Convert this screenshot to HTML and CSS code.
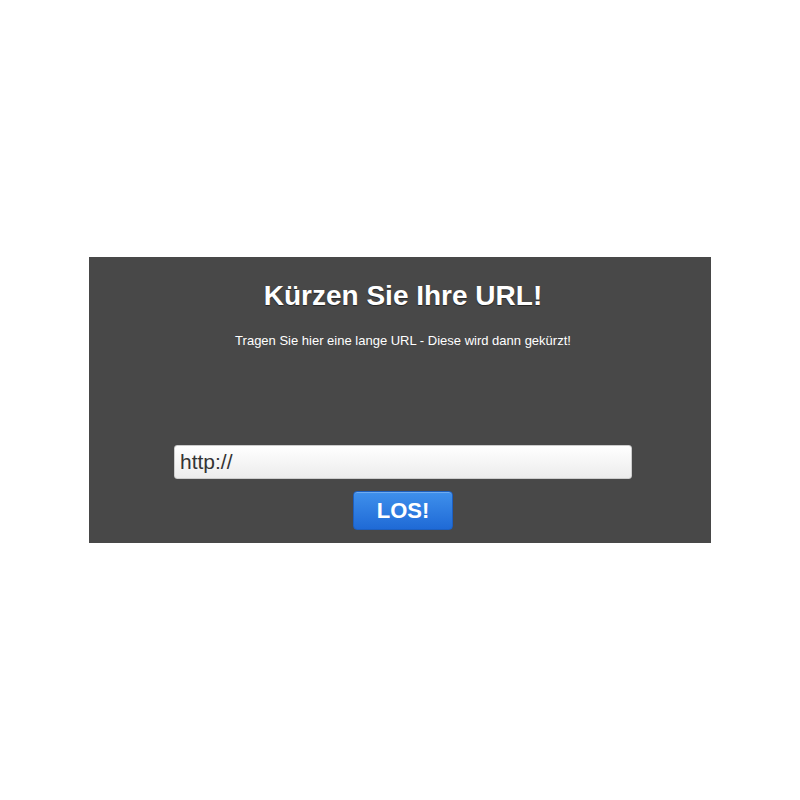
FILE: index.html
```html
<!DOCTYPE html>
<html lang="de">
<head>
<meta charset="utf-8">
<title>URL kürzen</title>
<link rel="stylesheet" href="styles.css">
</head>
<body>
<div class="page">
  <div class="panel">
    <h1 class="title">Kürzen Sie Ihre URL!</h1>
    <p class="subtitle">Tragen Sie hier eine lange URL - Diese wird dann gekürzt!</p>
    <form class="form">
      <input class="url" type="text" value="http://">
      <button class="go" type="button">LOS!</button>
    </form>
  </div>
</div>
</body>
</html>
```

FILE: styles.css
```css
html, body {
  margin: 0;
  padding: 0;
  background: #fff;
}
body {
  font-family: "Liberation Sans", Arial, sans-serif;
}
.page {
  padding-top: 257px;
  display: flex;
  justify-content: center;
}
.panel {
  width: 622px;
  height: 286px;
  box-sizing: border-box;
  background: #484848;
  display: flex;
  flex-direction: column;
  align-items: center;
  padding-top: 23px;
  padding-left: 6px;
}
.title {
  margin: 0;
  font-size: 28px;
  line-height: 32px;
  font-weight: bold;
  color: #fff;
  text-shadow: 0 1px 1px rgba(0,0,0,0.5);
}
.subtitle {
  margin: 21px 0 0;
  font-size: 13px;
  line-height: 15px;
  color: #fff;
}
.form {
  margin-top: 97px;
  display: flex;
  flex-direction: column;
  align-items: center;
  gap: 12px;
}
.url {
  width: 458px;
  height: 34px;
  box-sizing: border-box;
  border: 1px solid #ccc;
  border-radius: 3px;
  background: linear-gradient(#ffffff, #ececec);
  font-family: "Liberation Sans", Arial, sans-serif;
  font-size: 21px;
  color: #333;
  padding: 0 5px;
  outline: none;
}
.go {
  width: 100px;
  height: 39px;
  border: 1px solid #1d5fbf;
  border-radius: 4px;
  background: linear-gradient(#3f90ec, #1f6ad6);
  color: #fff;
  font-family: "Liberation Sans", Arial, sans-serif;
  font-size: 22px;
  font-weight: bold;
  padding: 0;
  box-shadow: inset 0 1px 0 rgba(255,255,255,0.25);
}
```
